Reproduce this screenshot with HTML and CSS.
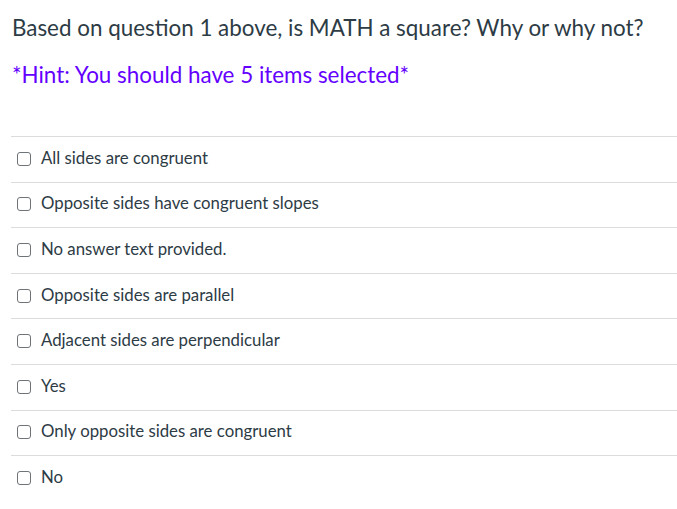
FILE: index.html
```html
<!DOCTYPE html>
<html lang="en">
<head>
<meta charset="utf-8">
<title>Question</title>
<link rel="stylesheet" href="styles.css">
</head>
<body>
<div class="question">
  <p class="prompt">Based on question 1 above, is MATH a square? Why or why not?</p>
  <p class="hint">*Hint: You should have 5 items selected*</p>
  <ul class="answers">
    <li class="answer"><label><span class="box"></span><span class="label">All sides are congruent</span></label></li>
    <li class="answer"><label><span class="box"></span><span class="label">Opposite sides have congruent slopes</span></label></li>
    <li class="answer"><label><span class="box"></span><span class="label">No answer text provided.</span></label></li>
    <li class="answer"><label><span class="box"></span><span class="label">Opposite sides are parallel</span></label></li>
    <li class="answer"><label><span class="box"></span><span class="label">Adjacent sides are perpendicular</span></label></li>
    <li class="answer"><label><span class="box"></span><span class="label">Yes</span></label></li>
    <li class="answer"><label><span class="box"></span><span class="label">Only opposite sides are congruent</span></label></li>
    <li class="answer"><label><span class="box"></span><span class="label">No</span></label></li>
  </ul>
</div>
</body>
</html>
```
FILE: styles.css
```css
html, body {
  margin: 0;
  padding: 0;
  background: #ffffff;
}
body {
  font-family: Lato, "Liberation Sans", sans-serif;
  color: #2d3b45;
}
.question {
  padding: 14px 0 0 11px;
}
.prompt {
  margin: 0 0 0 1px;
  font-size: 22.4px;
  line-height: 28px;
}
.hint {
  margin: 19px 0 0 1px;
  font-size: 22.4px;
  line-height: 28px;
  color: #6400ff;
}
.answers {
  list-style: none;
  margin: 47px 0 0 0;
  padding: 0;
}
.answer {
  border-top: 1px solid #dcdcdc;
  height: 44.6px;
  box-sizing: content-box;
  padding-left: 6px;
  display: flex;
  align-items: center;
}
.answer label {
  display: flex;
  align-items: center;
  gap: 10px;
  font-size: 16.8px;
  margin-bottom: 3px;
}
.box {
  width: 12px;
  height: 12px;
  border: 1.5px solid #6e7378;
  border-radius: 3px;
  flex: none;
  margin-top: 2px;
}
.label {
  line-height: 20px;
}
```
